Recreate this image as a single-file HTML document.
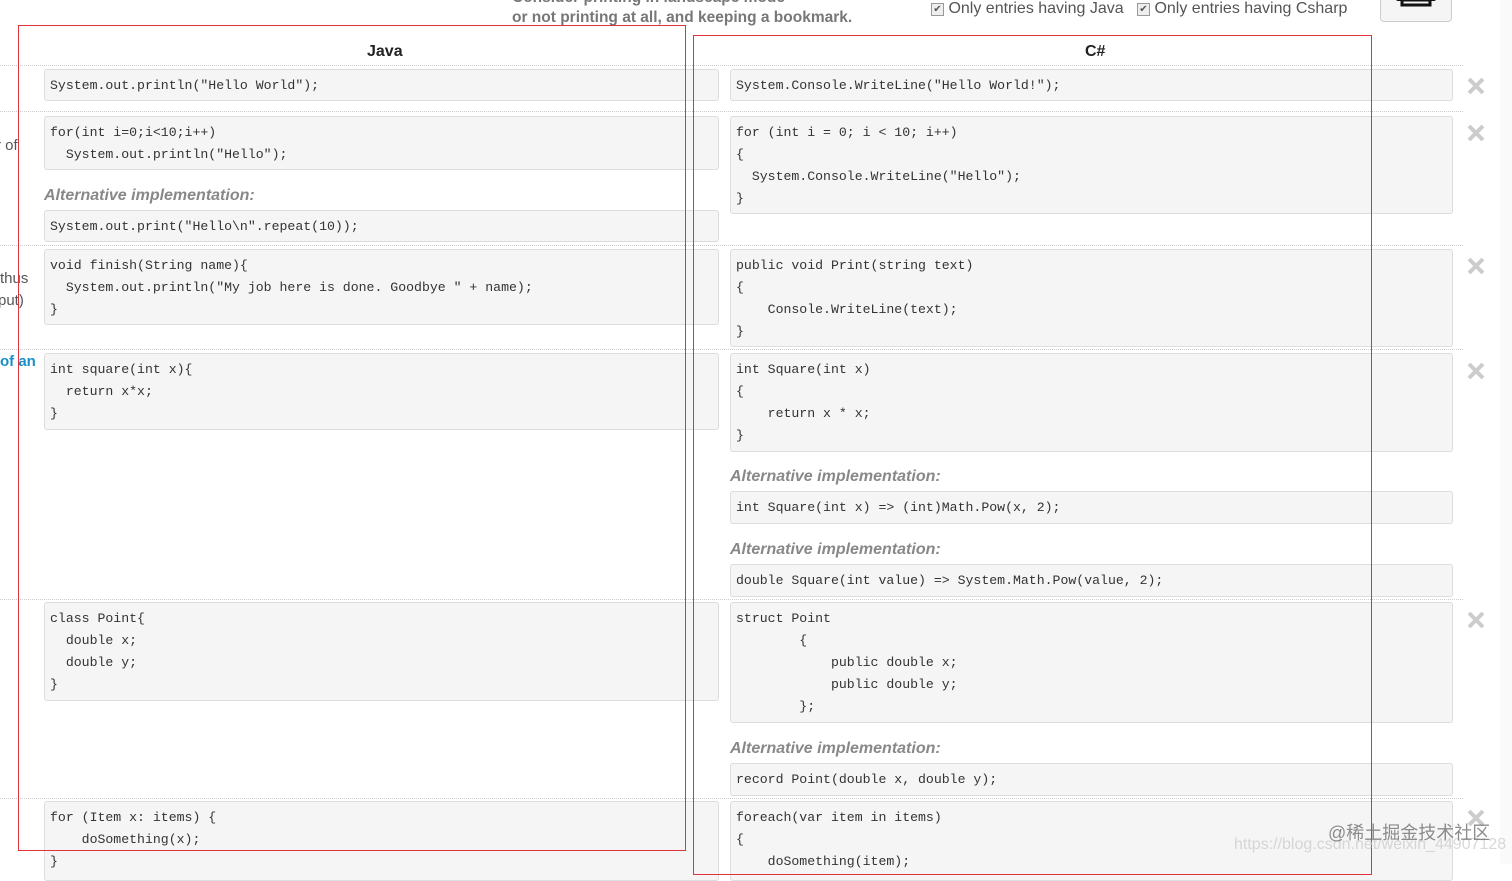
<!DOCTYPE html>
<html><head><meta charset="utf-8"><style>
body{margin:0;width:1512px;height:864px;overflow:hidden;background:#fff;position:relative;font-family:"Liberation Sans",sans-serif;}
.a{position:absolute}
.box{position:absolute;background:#f5f5f5;border:1px solid #ddd;border-radius:3px;box-sizing:border-box;padding:5px 5px 3px;margin:0;font-family:"Liberation Mono",monospace;font-size:13.2px;line-height:22px;color:#333;white-space:pre;overflow:hidden}
.j{left:44px;width:675px}
.c{left:730px;width:723px}
.sep{position:absolute;left:0;width:1463px;border-top:1px dotted #ccc;height:0}
.alt{position:absolute;font-style:italic;font-weight:bold;color:#888;font-size:16px}
.x{position:absolute;left:1467px;width:18px;height:18px}
.red{position:absolute;border:1px solid #e0343c;box-sizing:border-box}
.hd{position:absolute;font-weight:bold;font-size:16px;color:#222}
.side{position:absolute;left:0;color:#555;font-size:15px}
</style></head><body>
<div class="a" style="left:512px;top:-12px;color:#777;font-weight:bold;font-size:15.5px;line-height:20px">Consider printing in landscape mode<br>or not printing at all, and keeping a bookmark.</div>
<div class="a" style="left:931px;top:0;font-size:16px;color:#555"><span style="display:inline-block;width:11px;height:11px;border:1px solid #999;background:#eee;font-size:10px;line-height:11px;text-align:center;vertical-align:1px">✔</span> Only entries having Java</div>
<div class="a" style="left:1137px;top:0;font-size:16px;color:#555"><span style="display:inline-block;width:11px;height:11px;border:1px solid #999;background:#eee;font-size:10px;line-height:11px;text-align:center;vertical-align:1px">✔</span> Only entries having Csharp</div>
<div class="a" style="left:1380px;top:-10px;width:72px;height:32px;border:1px solid #ccc;border-radius:4px;background:#f5f5f5;box-sizing:border-box">
<svg width="72" height="32" style="position:absolute;left:-1px;top:0"><rect x="16" y="2" width="40" height="8" rx="2" fill="#111"/><rect x="22" y="9" width="28" height="5" fill="none" stroke="#111" stroke-width="3"/></svg></div>
<div class="a" style="left:1500px;top:0;width:12px;height:864px;background:#fafafa"></div>

<div class="hd" style="left:367px;top:43px">Java</div>
<div class="hd" style="left:1085px;top:43px">C#</div>

<div class="sep" style="top:65px"></div>
<div class="sep" style="top:111px"></div>
<div class="sep" style="top:245px"></div>
<div class="sep" style="top:349px"></div>
<div class="sep" style="top:599px"></div>
<div class="sep" style="top:798px"></div>

<div class="side" style="top:137px;left:-4px">r of</div>
<div class="side" style="top:270px">thus</div>
<div class="side" style="top:292px;left:-2px">put)</div>
<div class="side" style="top:353px;color:#1a8fc9;font-weight:bold">of an</div>

<pre class="box j" style="top:69px;height:32px">System.out.println("Hello World");</pre>
<pre class="box c" style="top:69px;height:32px">System.Console.WriteLine("Hello World!");</pre>
<svg class="x" style="top:77px" viewBox="0 0 18 18"><path d="M2 2L16 16M16 2L2 16" stroke="#ccc" stroke-width="4"/></svg>

<pre class="box j" style="top:116px;height:54px">for(int i=0;i&lt;10;i++)
  System.out.println("Hello");</pre>
<div class="alt" style="left:44px;top:187px">Alternative implementation:</div>
<pre class="box j" style="top:210px;height:32px">System.out.print("Hello\n".repeat(10));</pre>
<pre class="box c" style="top:116px;height:98px">for (int i = 0; i &lt; 10; i++)
{
  System.Console.WriteLine("Hello");
}</pre>
<svg class="x" style="top:124px" viewBox="0 0 18 18"><path d="M2 2L16 16M16 2L2 16" stroke="#ccc" stroke-width="4"/></svg>

<pre class="box j" style="top:249px;height:76px">void finish(String name){
  System.out.println("My job here is done. Goodbye " + name);
}</pre>
<pre class="box c" style="top:249px;height:98px">public void Print(string text)
{
    Console.WriteLine(text);
}</pre>
<svg class="x" style="top:257px" viewBox="0 0 18 18"><path d="M2 2L16 16M16 2L2 16" stroke="#ccc" stroke-width="4"/></svg>

<pre class="box j" style="top:353px;height:77px">int square(int x){
  return x*x;
}</pre>
<pre class="box c" style="top:353px;height:99px">int Square(int x)
{
    return x * x;
}</pre>
<svg class="x" style="top:362px" viewBox="0 0 18 18"><path d="M2 2L16 16M16 2L2 16" stroke="#ccc" stroke-width="4"/></svg>
<div class="alt" style="left:730px;top:468px">Alternative implementation:</div>
<pre class="box c" style="top:491px;height:33px">int Square(int x) =&gt; (int)Math.Pow(x, 2);</pre>
<div class="alt" style="left:730px;top:541px">Alternative implementation:</div>
<pre class="box c" style="top:564px;height:33px">double Square(int value) =&gt; System.Math.Pow(value, 2);</pre>

<pre class="box j" style="top:602px;height:99px">class Point{
  double x;
  double y;
}</pre>
<pre class="box c" style="top:602px;height:121px">struct Point
        {
            public double x;
            public double y;
        };</pre>
<svg class="x" style="top:611px" viewBox="0 0 18 18"><path d="M2 2L16 16M16 2L2 16" stroke="#ccc" stroke-width="4"/></svg>
<div class="alt" style="left:730px;top:740px">Alternative implementation:</div>
<pre class="box c" style="top:763px;height:33px">record Point(double x, double y);</pre>

<pre class="box j" style="top:801px;height:80px">for (Item x: items) {
    doSomething(x);
}</pre>
<pre class="box c" style="top:801px;height:80px">foreach(var item in items)
{
    doSomething(item);</pre>
<svg class="x" style="top:809px" viewBox="0 0 18 18"><path d="M2 2L16 16M16 2L2 16" stroke="#ccc" stroke-width="4"/></svg>

<div class="red" style="left:18px;top:25px;width:668px;height:826px"></div>
<div class="red" style="left:693px;top:35px;width:679px;height:840px"></div>

<div class="a" style="left:1234px;top:836px;font-size:16px;color:rgba(200,200,200,0.7)">https://blog.csdn.net/weixin_44907128</div>
<div class="a" style="left:1328px;top:819px;font-size:18px;color:rgba(120,120,120,0.85);font-family:'Liberation Sans','Noto Sans CJK SC',sans-serif">@稀土掘金技术社区</div>
</body></html>
